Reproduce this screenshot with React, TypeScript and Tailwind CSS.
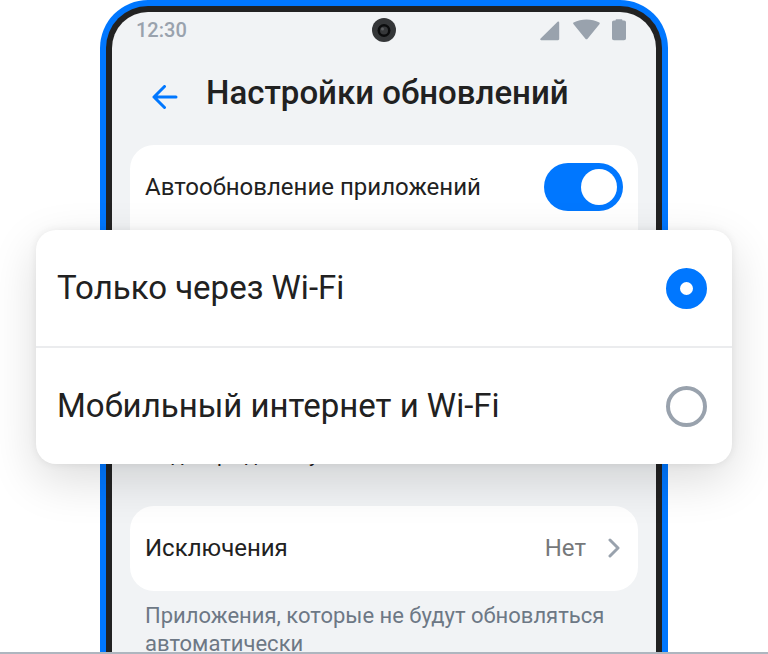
import React, { useState } from 'react';

const OPTIONS = [
  { id: 'wifi', label: 'Только через Wi-Fi' },
  { id: 'any', label: 'Мобильный интернет и Wi-Fi' },
];

const Camera: React.FC = () => (
  <svg viewBox="0 0 24 24" className="size-6" aria-hidden="true">
    <circle cx="12" cy="12" r="12" fill="#343638" />
    <circle cx="12" cy="12.5" r="6.5" fill="#0b0c0d" />
    <circle cx="12" cy="12.5" r="4" fill="#36383a" />
    <circle cx="10.5" cy="11" r="1.5" fill="#5a5c5e" />
  </svg>
);

const StatusIcons: React.FC = () => (
  <svg viewBox="0 0 87 22" className="h-[22px] w-[87px]" fill="#99a2ad" aria-hidden="true">
    <path d="M17.6 2.8 .6 19.4c-.8.8-.4 1.8.6 1.8H18c.7 0 1.2-.5 1.2-1.2V3.500c0-1-.9-1.4-1.6-.7Z" />
    <path d="M33.6 5.2c-.6-.5-.6-1.2 0-1.6C37.5 1.400 42 .4 46.500.4s9 1 12.800 3.200c.6.4.6 1.100.1 1.700L47.600 19.800c-.6.7-1.600.7-2.200 0Z" />
    <path d="M75.500 1.500c0-.8.5-1.300 1.300-1.300h4.400c.8 0 1.300.5 1.300 1.300H84c1.300 0 2 .7 2 2V19.200c0 1.300-.7 2-2 2H74c-1.300 0-2-.7-2-2V3.500c0-1.300.7-2 2-2Z" />
  </svg>
);

const StatusBar: React.FC = () => (
  <div className="grid grid-cols-3 items-center px-6 pt-1.5">
    <span className="text-xl leading-6 font-medium text-[#99a2ad]">12:30</span>
    <span className="justify-self-center">
      <Camera />
    </span>
    <span className="justify-self-end pr-[5px]">
      <StatusIcons />
    </span>
  </div>
);

// The sheet with the update modes, lying over the phone
const ModeSheet: React.FC = () => {
  const [mode, setMode] = useState('wifi');

  return (
    <div
      role="radiogroup"
      aria-label="Автообновление приложений"
      className="absolute inset-x-9 top-[230px] divide-y-2 divide-[#ebecee] rounded-[20px] bg-white shadow-[0_16px_48px_rgba(0,0,0,0.14),0_0_8px_rgba(0,0,0,0.07)]"
    >
      {OPTIONS.map(option => (
        <label key={option.id} className="box-content flex h-[116px] items-center justify-between pr-[25px] pl-[21px] text-[33px] leading-10">
          {option.label}
          <input
            type="radio"
            name="mode"
            value={option.id}
            checked={mode === option.id}
            onChange={() => setMode(option.id)}
            className="size-[41px] shrink-0 appearance-none rounded-full border-4 border-[#99a2ad] bg-white checked:border-[14px] checked:border-[#0077ff]"
          />
        </label>
      ))}
    </div>
  );
};

export default function App() {
  const [autoUpdate, setAutoUpdate] = useState(true);

  return (
    <main className="relative h-screen overflow-hidden border-b-2 border-[#aeb6bf] bg-white font-['Roboto','Noto_Sans',sans-serif] text-[#212121]">
      <div className="mx-[100px] rounded-t-[48px] bg-[#0077ff] px-1.5 pt-1.5">
        <div className="rounded-t-[42px] bg-[#222222] px-1.5 pt-1.5">
          <div className="min-h-screen rounded-t-[36px] bg-[#f1f3f5]">
            <StatusBar />

            <header className="flex items-center gap-7 px-10 pt-7">
              <button type="button" aria-label="Назад" className="pt-2 text-[#0077ff]">
                <svg viewBox="0 0 26 24" className="h-6 w-[26px]" fill="none" stroke="currentColor" strokeWidth="3" strokeLinecap="round" strokeLinejoin="round">
                  <path d="M24 12H2M12.500 1.500 2 12l10.500 10.500" />
                </svg>
              </button>
              <h1 className="text-[33px] leading-[46px] font-medium">Настройки обновлений</h1>
            </header>

            <div className="px-[18px] pt-[29px]">
              <section className="h-[255px] rounded-3xl bg-white">
                <label className="flex h-[85px] items-center justify-between px-[15px] pb-0.5 text-2xl">
                  Автообновление приложений
                  <input
                    type="checkbox"
                    role="switch"
                    checked={autoUpdate}
                    onChange={() => setAutoUpdate(!autoUpdate)}
                    className="flex h-12 w-[79px] shrink-0 appearance-none items-center rounded-full bg-[#99a2ad] px-1.5 before:size-9 before:rounded-full before:bg-white checked:justify-end checked:bg-[#0077ff]"
                  />
                </label>
              </section>
              <p className="px-[15px] pt-[41px] text-[21px] leading-7">Подтверждение установки</p>

              <section className="mt-[37px] rounded-3xl bg-white">
                <button type="button" className="flex h-[85px] w-full items-center pr-[17px] pb-0.5 pl-[15px] text-left text-2xl">
                  <span className="flex-1">Исключения</span>
                  <span className="text-[#76787a]">Нет</span>
                  <svg viewBox="0 0 14 20" className="ml-[21px] h-5 w-3.5" fill="none" stroke="#99a2ad" strokeWidth="3" strokeLinecap="round" strokeLinejoin="round" aria-hidden="true">
                    <path d="m3 2 8 8-8 8" />
                  </svg>
                </button>
              </section>
              <p className="px-[15px] pt-[11px] text-[22px] leading-7 text-[#6d7885]">
                Приложения, которые не будут обновляться автоматически
              </p>
            </div>
          </div>
        </div>
      </div>

      <ModeSheet />
    </main>
  );
}
